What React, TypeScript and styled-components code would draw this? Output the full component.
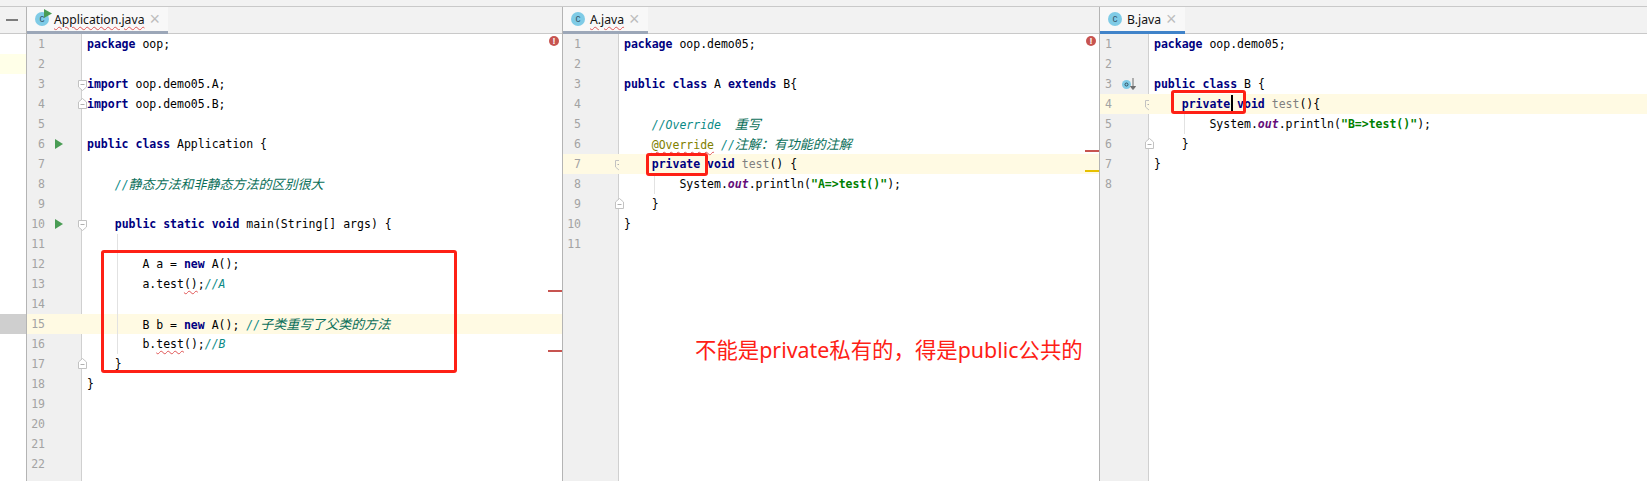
import React from 'react'
import styled, { createGlobalStyle } from 'styled-components'

const GlobalStyle = createGlobalStyle`
  html, body {
    margin: 0;
    padding: 0;
    background: #fff;
  }
`

const MONO = `'DejaVu Sans Mono', monospace`
const CJK = `'Noto Sans CJK SC', sans-serif`
const LINE = 20

type Row = { n: number; code?: React.ReactNode; active?: boolean; run?: boolean; fold?: 'down' | 'up'; override?: boolean }

const Kw = styled.span`
  color: #000080;
  font-weight: bold;
`
const Comment = styled.span`
  color: #0a8a86;
  font-style: italic;
`
const Han = styled.span`
  font-family: ${CJK};
  font-size: 13px;
  font-style: italic;
  color: #0b6f5a;
  font-weight: 400;
`
const Str = styled.span`
  color: #008000;
  font-weight: bold;
`
const Field = styled.span`
  color: #660e7a;
  font-style: italic;
  font-weight: bold;
`
const Unused = styled.span`
  color: #808080;
`
const Annotation = styled.span`
  color: #808000;
  text-decoration: underline wavy #e05555 1px;
  text-underline-offset: 2px;
`
const Squiggle = styled.span`
  text-decoration: underline wavy #e05555 1px;
  text-underline-offset: 2px;
`

const Page = styled.div`
  position: relative;
  width: 1647px;
  height: 481px;
  overflow: hidden;
  background: #fff;
  display: flex;
  flex-direction: column;
`
const TopStrip = styled.div`
  height: 6px;
  background: #f2f2f2;
  border-bottom: 1px solid #c9c9c9;
`
const Panes = styled.div`
  flex: 1;
  display: grid;
  grid-template-columns: 26px 536px 537px 1fr;
  min-height: 0;
`
const Rail = styled.div`
  display: flex;
  flex-direction: column;
`
const RailHead = styled.div`
  height: 26px;
  background: #f2f2f2;
  border-bottom: 1px solid #c9c9c9;
  display: flex;
  align-items: center;
  padding-left: 6px;
`
const Minus = styled.div`
  width: 12px;
  height: 2px;
  background: #7d7d7d;
`
const RailRow = styled.div<{ $tone?: string }>`
  height: ${LINE}px;
  background: ${(p) => p.$tone || 'transparent'};
`
const Pane = styled.div`
  display: flex;
  flex-direction: column;
  border-left: 1px solid #b4b4b4;
  min-width: 0;
`
const TabBar = styled.div`
  height: 26px;
  background: #f2f2f2;
  border-bottom: 1px solid #c9c9c9;
  display: flex;
`
const Tab = styled.div<{ $focused?: boolean }>`
  box-sizing: border-box;
  height: 27px;
  display: flex;
  align-items: center;
  padding: 0 8px 0 8px;
  background: #f8f8f8;
  border-bottom: 3px solid ${(p) => (p.$focused ? '#4083c9' : '#9ca7b8')};
  margin-bottom: -1px;
`
const ClassIcon = styled.span`
  position: relative;
  width: 14px;
  height: 14px;
  border-radius: 50%;
  background: #7fcbe6;
  color: #34566a;
  font: 10px/13px 'Liberation Sans', sans-serif;
  text-align: center;
  flex: none;
`
const RunBadge = styled.svg`
  position: absolute;
  top: -3px;
  right: -3px;
  width: 8px;
  height: 9px;
`
const TabLabel = styled.span<{ $error?: boolean }>`
  margin-left: 5px;
  font: 12.2px 'Noto Sans', sans-serif;
  color: #111;
  text-decoration: ${(p) => (p.$error ? 'underline wavy #e05555 1px' : 'none')};
  text-underline-offset: 2px;
`
const TabClose = styled.span`
  margin-left: 5px;
  color: #bdbdbd;
  font: 18px/1 'Liberation Sans', sans-serif;
`
const Editor = styled.div`
  position: relative;
  flex: 1;
  display: flex;
  min-height: 0;
`
const Gutter = styled.div<{ $width: number }>`
  flex: none;
  box-sizing: border-box;
  width: ${(p) => p.$width}px;
  background: #f0f0f0;
  border-right: 1px solid #d0d0d0;
`
const GutterCell = styled.div<{ $active?: boolean }>`
  position: relative;
  height: ${LINE}px;
  display: flex;
  align-items: center;
  margin-right: -1px;
  background: ${(p) => (p.$active ? '#fffae3' : 'transparent')};
`
const LineNo = styled.span<{ $width: number }>`
  width: ${(p) => p.$width}px;
  text-align: right;
  font: 11.5px/${LINE}px ${MONO};
  color: #a3a3a3;
  flex: none;
`
const GutterMark = styled.svg`
  margin-left: 10px;
  flex: none;
`
const FoldMark = styled.svg<{ $dir: 'down' | 'up' }>`
  position: absolute;
  right: -5px;
  top: ${(p) => (p.$dir === 'down' ? 6 : 4)}px;
  width: 9px;
  height: 11px;
`
const Code = styled.div`
  flex: 1;
  position: relative;
  min-width: 0;
`
const CodeLine = styled.div<{ $active?: boolean }>`
  height: ${LINE}px;
  padding-left: 5px;
  font: 11.5px/${LINE}px ${MONO};
  color: #000;
  white-space: pre;
  background: ${(p) => (p.$active ? '#fffae3' : 'transparent')};
`
const IndentGuide = styled.div<{ $x: number; $top: number; $height: number }>`
  position: absolute;
  left: ${(p) => p.$x}px;
  top: ${(p) => p.$top}px;
  width: 1px;
  height: ${(p) => p.$height}px;
  background: #e2e2e2;
`
const ErrorDot = styled.span`
  position: absolute;
  top: 2px;
  right: 3px;
  width: 10px;
  height: 10px;
  border-radius: 50%;
  background: #c75450;
  color: #fff;
  font: bold 9px/10px 'Liberation Sans', sans-serif;
  text-align: center;
`
const Stripe = styled.div<{ $top: number; $color: string }>`
  position: absolute;
  right: 0;
  top: ${(p) => p.$top}px;
  width: 14px;
  height: 2px;
  background: ${(p) => p.$color};
`
const Caret = styled.div`
  position: absolute;
  left: 1231px;
  top: 95px;
  width: 2px;
  height: 16px;
  background: #000;
`
const RedBox = styled.div<{ $x: number; $y: number; $w: number; $h: number }>`
  position: absolute;
  box-sizing: border-box;
  left: ${(p) => p.$x}px;
  top: ${(p) => p.$y}px;
  width: ${(p) => p.$w}px;
  height: ${(p) => p.$h}px;
  border: 3px solid #fe2015;
  border-radius: 3px;
`
const Note = styled.div`
  position: absolute;
  left: 695px;
  top: 335px;
  font: 21.4px/30px 'Noto Sans', ${CJK};
  color: #fe2015;
  white-space: pre;
`

const Fold = ({ dir, active }: { dir: 'down' | 'up'; active?: boolean }) => (
  <FoldMark $dir={dir} viewBox="0 0 9 11">
    <path
      d={dir === 'down' ? 'M.5.5h8V7L4.5 10.5.5 7z' : 'M.5 10.5h8V4L4.5.5.5 4z'}
      fill={active ? '#fffae3' : '#fff'}
      stroke="#c2c2c2"
    />
    <path d={dir === 'down' ? 'M2.5 4.5h4' : 'M2.5 6.5h4'} stroke="#b0b0b0" />
  </FoldMark>
)

const RunMark = () => (
  <GutterMark width="8" height="10" viewBox="0 0 8 10">
    <path d="M0 0l8 5-8 5z" fill="#499c54" />
  </GutterMark>
)

const OverrideMark = () => (
  <GutterMark width="15" height="13" viewBox="0 0 15 13">
    <circle cx="4.5" cy="6.5" r="4.5" fill="#7fcbe6" />
    <circle cx="4.5" cy="6.5" r="1.5" fill="none" stroke="#2f4f5f" />
    <path d="M11 0v10M8.5 8.5l2.5 3 2.5-3z" stroke="#6e6e6e" fill="#6e6e6e" strokeWidth="1" />
  </GutterMark>
)

const applicationRows: Row[] = [
  { n: 1, code: <><Kw>package</Kw> oop;</> },
  { n: 2 },
  { n: 3, fold: 'down', code: <><Kw>import</Kw> oop.demo05.A;</> },
  { n: 4, fold: 'up', code: <><Kw>import</Kw> oop.demo05.B;</> },
  { n: 5 },
  { n: 6, run: true, code: <><Kw>public class</Kw> Application {'{'}</> },
  { n: 7 },
  { n: 8, code: <>{'    '}<Comment>//</Comment><Han>静态方法和非静态方法的区别很大</Han></> },
  { n: 9 },
  { n: 10, run: true, fold: 'down', code: <>{'    '}<Kw>public static void</Kw> main(String[] args) {'{'}</> },
  { n: 11 },
  { n: 12, code: <>{'        '}A a = <Kw>new</Kw> A();</> },
  { n: 13, code: <>{'        '}a.test<Squiggle>()</Squiggle>;<Comment>//A</Comment></> },
  { n: 14 },
  { n: 15, active: true, code: <>{'        '}B b = <Kw>new</Kw> A(); <Comment>//</Comment><Han>子类重写了父类的方法</Han></> },
  { n: 16, code: <>{'        '}b.<Squiggle>test</Squiggle>();<Comment>//B</Comment></> },
  { n: 17, fold: 'up', code: <>{'    }'}</> },
  { n: 18, code: <>{'}'}</> },
  { n: 19 },
  { n: 20 },
  { n: 21 },
  { n: 22 },
]

const aRows: Row[] = [
  { n: 1, code: <><Kw>package</Kw> oop.demo05;</> },
  { n: 2 },
  { n: 3, code: <><Kw>public class</Kw> A <Kw>extends</Kw> B{'{'}</> },
  { n: 4 },
  { n: 5, code: <>{'    '}<Comment>//Override  </Comment><Han>重写</Han></> },
  { n: 6, code: <>{'    '}<Annotation>@Override</Annotation> <Comment>//</Comment><Han>注解：有功能的注解</Han></> },
  { n: 7, active: true, fold: 'down', code: <>{'    '}<Kw>private void</Kw> <Unused>test</Unused>() {'{'}</> },
  { n: 8, code: <>{'        '}System.<Field>out</Field>.println(<Str>"A=&gt;test()"</Str>);</> },
  { n: 9, fold: 'up', code: <>{'    }'}</> },
  { n: 10, code: <>{'}'}</> },
  { n: 11 },
]

const bRows: Row[] = [
  { n: 1, code: <><Kw>package</Kw> oop.demo05;</> },
  { n: 2 },
  { n: 3, override: true, code: <><Kw>public class</Kw> B {'{'}</> },
  { n: 4, active: true, fold: 'down', code: <>{'    '}<Kw>private void</Kw> <Unused>test</Unused>(){'{'}</> },
  { n: 5, code: <>{'        '}System.<Field>out</Field>.println(<Str>"B=&gt;test()"</Str>);</> },
  { n: 6, fold: 'up', code: <>{'    }'}</> },
  { n: 7, code: <>{'}'}</> },
  { n: 8 },
]

const EditorPane = ({
  file,
  rows,
  gutter,
  numWidth,
  focused,
  error,
  run,
  squiggle,
  stripes,
  children,
}: {
  file: string
  rows: Row[]
  gutter: number
  numWidth: number
  focused?: boolean
  error?: boolean
  run?: boolean
  squiggle?: boolean
  stripes?: { top: number; color: string }[]
  children?: React.ReactNode
}) => (
  <Pane>
    <TabBar>
      <Tab $focused={focused}>
        <ClassIcon>
          c
          {run && (
            <RunBadge viewBox="0 0 8 9">
              <path d="M0 0l8 4.5L0 9z" fill="#499c54" />
            </RunBadge>
          )}
        </ClassIcon>
        <TabLabel $error={squiggle}>{file}</TabLabel>
        <TabClose>×</TabClose>
      </Tab>
    </TabBar>
    <Editor>
      <Gutter $width={gutter}>
        {rows.map((r) => (
          <GutterCell key={r.n} $active={r.active}>
            <LineNo $width={numWidth}>{r.n}</LineNo>
            {r.run && <RunMark />}
            {r.override && <OverrideMark />}
            {r.fold && <Fold dir={r.fold} active={r.active} />}
          </GutterCell>
        ))}
      </Gutter>
      <Code>
        {children}
        {rows.map((r) => (
          <CodeLine key={r.n} $active={r.active}>
            {r.code}
          </CodeLine>
        ))}
      </Code>
      {error && <ErrorDot>!</ErrorDot>}
      {stripes?.map((s) => <Stripe key={s.top} $top={s.top} $color={s.color} />)}
    </Editor>
  </Pane>
)

const railTones: Record<number, string> = { 2: '#ffffe8', 15: '#cfcfcf' }

export default function App() {
  return (
    <Page>
      <GlobalStyle />
      <TopStrip />
      <Panes>
        <Rail>
          <RailHead>
            <Minus />
          </RailHead>
          {Array.from({ length: 22 }, (_, i) => (
            <RailRow key={i} $tone={railTones[i + 1]} />
          ))}
        </Rail>
        <EditorPane
          file="Application.java"
          rows={applicationRows}
          gutter={55}
          numWidth={18}
          run
          squiggle
          error
          stripes={[
            { top: 256, color: '#c75450' },
            { top: 316, color: '#c75450' },
          ]}
        >
          <IndentGuide $x={35} $top={200} $height={120} />
        </EditorPane>
        <EditorPane
          file="A.java"
          rows={aRows}
          gutter={56}
          numWidth={18}
          squiggle
          error
          stripes={[
            { top: 116, color: '#c75450' },
            { top: 136, color: '#e6c000' },
          ]}
        >
          <IndentGuide $x={35} $top={140} $height={20} />
        </EditorPane>
        <EditorPane file="B.java" rows={bRows} gutter={49} numWidth={12} focused>
          <IndentGuide $x={35} $top={80} $height={20} />
        </EditorPane>
      </Panes>
      <Caret />
      <RedBox $x={101} $y={250} $w={356} $h={123} />
      <RedBox $x={646} $y={153} $w={62} $h={23} />
      <RedBox $x={1171} $y={90} $w={75} $h={24} />
      <Note>不能是private私有的，得是public公共的</Note>
    </Page>
  )
}
